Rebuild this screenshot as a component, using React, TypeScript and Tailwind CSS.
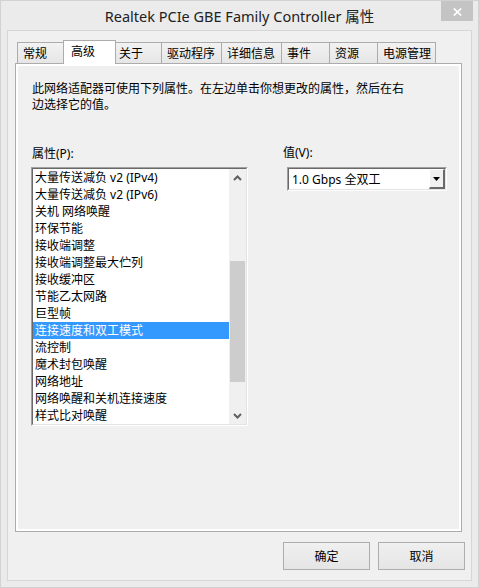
import React from "react";

const items = [
  "大量传送减负 v2 (IPv4)",
  "大量传送减负 v2 (IPv6)",
  "关机 网络唤醒",
  "环保节能",
  "接收端调整",
  "接收端调整最大伫列",
  "接收缓冲区",
  "节能乙太网路",
  "巨型帧",
  "连接速度和双工模式",
  "流控制",
  "魔术封包唤醒",
  "网络地址",
  "网络唤醒和关机连接速度",
  "样式比对唤醒",
];

const tabs = [
  { label: "常规", w: "w-[49px]" },
  { label: "高级", w: "w-[53px]", selected: true },
  { label: "关于", w: "w-[49px]" },
  { label: "驱动程序", w: "w-[61px]" },
  { label: "详细信息", w: "w-[61px]" },
  { label: "事件", w: "w-[49px]" },
  { label: "资源", w: "w-[49px]" },
  { label: "电源管理", w: "w-[59px]" },
];

function Chevron({ up }: { up?: boolean }) {
  return (
    <svg width="9" height="6" viewBox="0 0 9 6" className="block">
      {up ? (
        <path d="M1 5 L4.5 1.5 L8 5" fill="none" stroke="#606060" strokeWidth="2" />
      ) : (
        <path d="M1 1 L4.5 4.5 L8 1" fill="none" stroke="#606060" strokeWidth="2" />
      )}
    </svg>
  );
}

export default function App() {
  return (
    <div className="w-[479px] h-[588px] bg-[#ebebeb] border border-[#d2d2d2] flex flex-col font-[family-name:'Noto_Sans','Noto_Sans_CJK_SC',sans-serif] text-[12px] text-black">
      {/* title bar */}
      <div className="relative h-[29px] shrink-0 flex items-center justify-center">
        <span className="text-[14.5px] leading-none text-[#222] pt-[1px]">
          Realtek PCIe GBE Family Controller 属性
        </span>
        <div className="absolute right-[5px] top-0 w-[32px] h-[20px] bg-[#c4c4c4] flex items-center justify-center">
          <svg width="9" height="8" viewBox="0 0 9 8" className="mt-[2px]">
            <path d="M0.8 0.5 L8.2 7.5 M8.2 0.5 L0.8 7.5" stroke="#fff" strokeWidth="1.7" />
          </svg>
        </div>
      </div>

      {/* client area */}
      <div className="mx-[6px] mb-[6px] flex-1 border border-[#d6d6d6] bg-[#f0f0f0] flex flex-col">
        {/* tabs */}
        <div className="pt-[9px] pl-[9px] h-[32px] flex items-end shrink-0">
          {tabs.map((t, i) =>
            t.selected ? (
              <div
                key={t.label}
                className={`${t.w} h-[24px] -mb-px -ml-[3px] -mr-[2px] relative z-10 bg-white border border-b-0 border-[#acacac] pl-[7px] pb-[2px] flex items-center leading-[15px]`}
              >
                {t.label}
              </div>
            ) : (
              <div
                key={t.label}
                className={`${t.w} h-[21px] ${i === 0 ? "" : "-ml-px"} border border-b-0 border-[#acacac] bg-gradient-to-b from-[#f2f2f2] to-[#e6e6e6] pl-[5px] flex items-center leading-[15px]`}
              >
                {t.label}
              </div>
            )
          )}
        </div>

        {/* panel */}
        <div className="ml-[7px] w-[447px] h-[469px] shrink-0 border border-[#acacac] bg-white">
          <div className="h-full border-2 border-white bg-[#f0f0f0] flex flex-col">
            <div className="pt-[15px] pl-[14px] leading-[16px]">
              <div>此网络适配器可使用下列属性。在左边单击你想更改的属性，然后在右</div>
              <div>边选择它的值。</div>
            </div>

            <div className="mt-[33px] flex">
              {/* left column */}
              <div className="ml-[13px] w-[217px] flex flex-col">
                <div className="pl-[1px] leading-[15px]">属性(P):</div>
                <div className="mt-[6px] border-t border-l border-t-[#a0a0a0] border-l-[#a0a0a0] border-b border-r border-b-white border-r-white">
                  <div className="h-[257px] border-t border-l border-t-[#696969] border-l-[#696969] border-b border-r border-b-[#e3e3e3] border-r-[#e3e3e3] bg-white flex">
                    <div className="flex-1 flex flex-col">
                      {items.map((it, i) => (
                        <div
                          key={it}
                          className={`h-[17px] leading-[17px] pl-[2px] whitespace-nowrap ${
                            i === 9 ? "bg-[#3399ff] text-white" : ""
                          }`}
                        >
                          {it}
                        </div>
                      ))}
                    </div>
                    <div className="w-[17px] bg-[#f0f0f0] flex flex-col">
                      <div className="h-[17px] flex items-center justify-center">
                        <Chevron up />
                      </div>
                      <div className="h-[75px]" />
                      <div className="h-[121px] mx-[1px] bg-[#cdcdcd]" />
                      <div className="flex-1" />
                      <div className="h-[17px] flex items-center justify-center">
                        <Chevron />
                      </div>
                    </div>
                  </div>
                </div>
              </div>

              {/* right column */}
              <div className="ml-[35px] flex flex-col">
                <div className="leading-[15px] -mt-[1px]">值(V):</div>
                <div className="mt-[7px] ml-[4px] w-[160px] border-t border-l border-t-[#a0a0a0] border-l-[#a0a0a0] border-b border-r border-b-white border-r-white">
                  <div className="h-[22px] border-t border-l border-t-[#696969] border-l-[#696969] border-b border-r border-b-[#e3e3e3] border-r-[#e3e3e3] bg-white flex">
                    <div className="flex-1 pl-[3px] pt-[2px] leading-[18px] whitespace-nowrap">
                      1.0 Gbps 全双工
                    </div>
                    <div className="w-[16px] h-full border-t border-l border-t-white border-l-white border-b-2 border-r-2 border-b-[#696969] border-r-[#696969] bg-[#f0f0f0] flex items-center justify-center">
                      <svg width="7" height="4" viewBox="0 0 7 4" className="block">
                        <path d="M0 0 H7 L3.5 4 Z" fill="#000" />
                      </svg>
                    </div>
                  </div>
                </div>
              </div>
            </div>
          </div>
        </div>

        {/* buttons */}
        <div className="mt-[10px] mr-[6px] flex justify-end gap-[8px]">
          <button className="w-[87px] h-[28px] border border-[#adadad] bg-gradient-to-b from-[#f0f0f0] to-[#e5e5e5] leading-[15px]">
            确定
          </button>
          <button className="w-[87px] h-[28px] border border-[#adadad] bg-gradient-to-b from-[#f0f0f0] to-[#e5e5e5] leading-[15px]">
            取消
          </button>
        </div>
      </div>
    </div>
  );
}
